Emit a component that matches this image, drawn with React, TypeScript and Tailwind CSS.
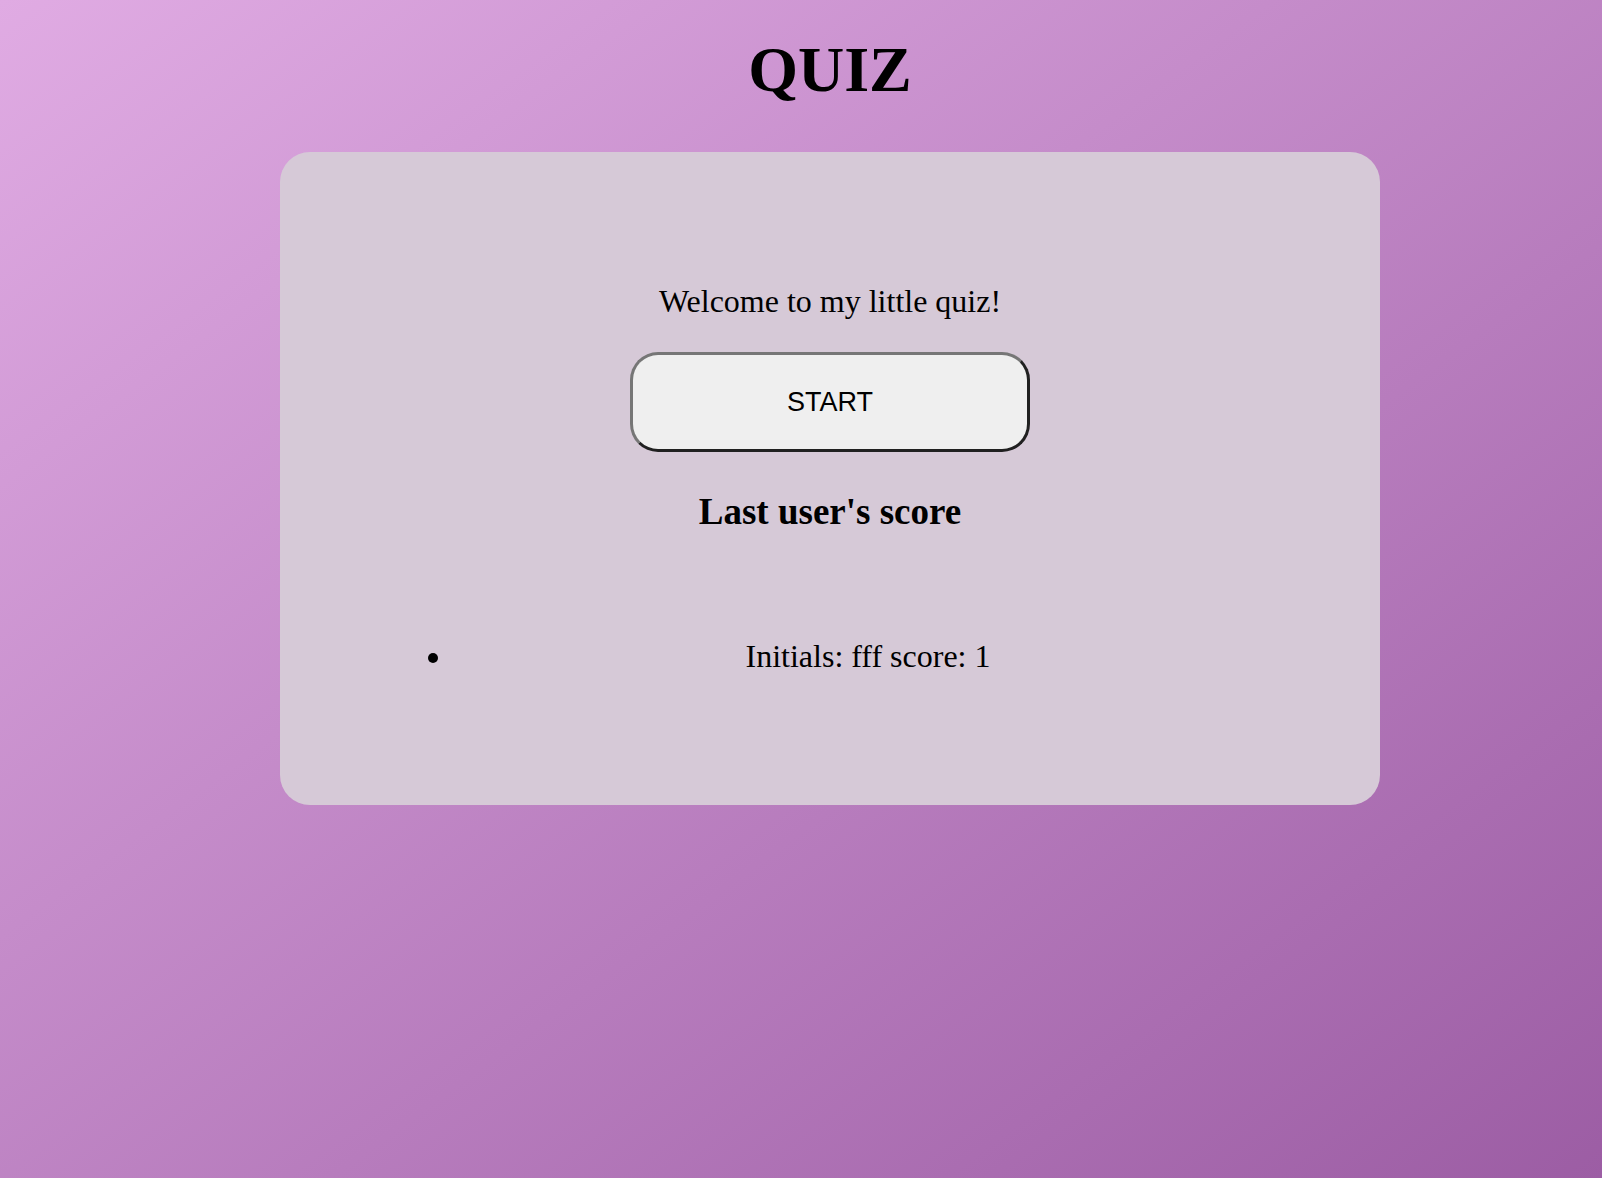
export default function App() {
  return (
    <div className="min-h-[1178px] w-full bg-[linear-gradient(to_bottom_right,#e0abe3,#9c5da4)] font-['Liberation_Serif',serif] text-black">
      <div className="flex flex-col items-center pl-[58px] pt-[38px]">
        <h1 className="text-[64px] font-bold leading-none">QUIZ</h1>

        <div className="mt-[50px] flex h-[653px] w-[1100px] flex-col items-center rounded-[30px] bg-[#d6c9d7] px-[100px] pt-[133px]">
          <p className="text-[32px] leading-none">Welcome to my little quiz!</p>

          <button className="mt-[35px] h-[100px] w-[400px] rounded-[28px] border-[3px] border-t-[#767676] border-l-[#767676] border-r-[#202020] border-b-[#202020] bg-[#efefef] font-['Liberation_Sans',Arial,sans-serif] text-[27px]">
            START
          </button>

          <h2 className="mt-[41px] text-[37px] font-bold leading-none">Last user's score</h2>

          <ul className="-mr-[2px] mt-[110px] list-disc self-stretch pl-[74px]">
            <li className="text-center text-[32px] leading-none">Initials: fff score: 1</li>
          </ul>
        </div>
      </div>
    </div>
  );
}
